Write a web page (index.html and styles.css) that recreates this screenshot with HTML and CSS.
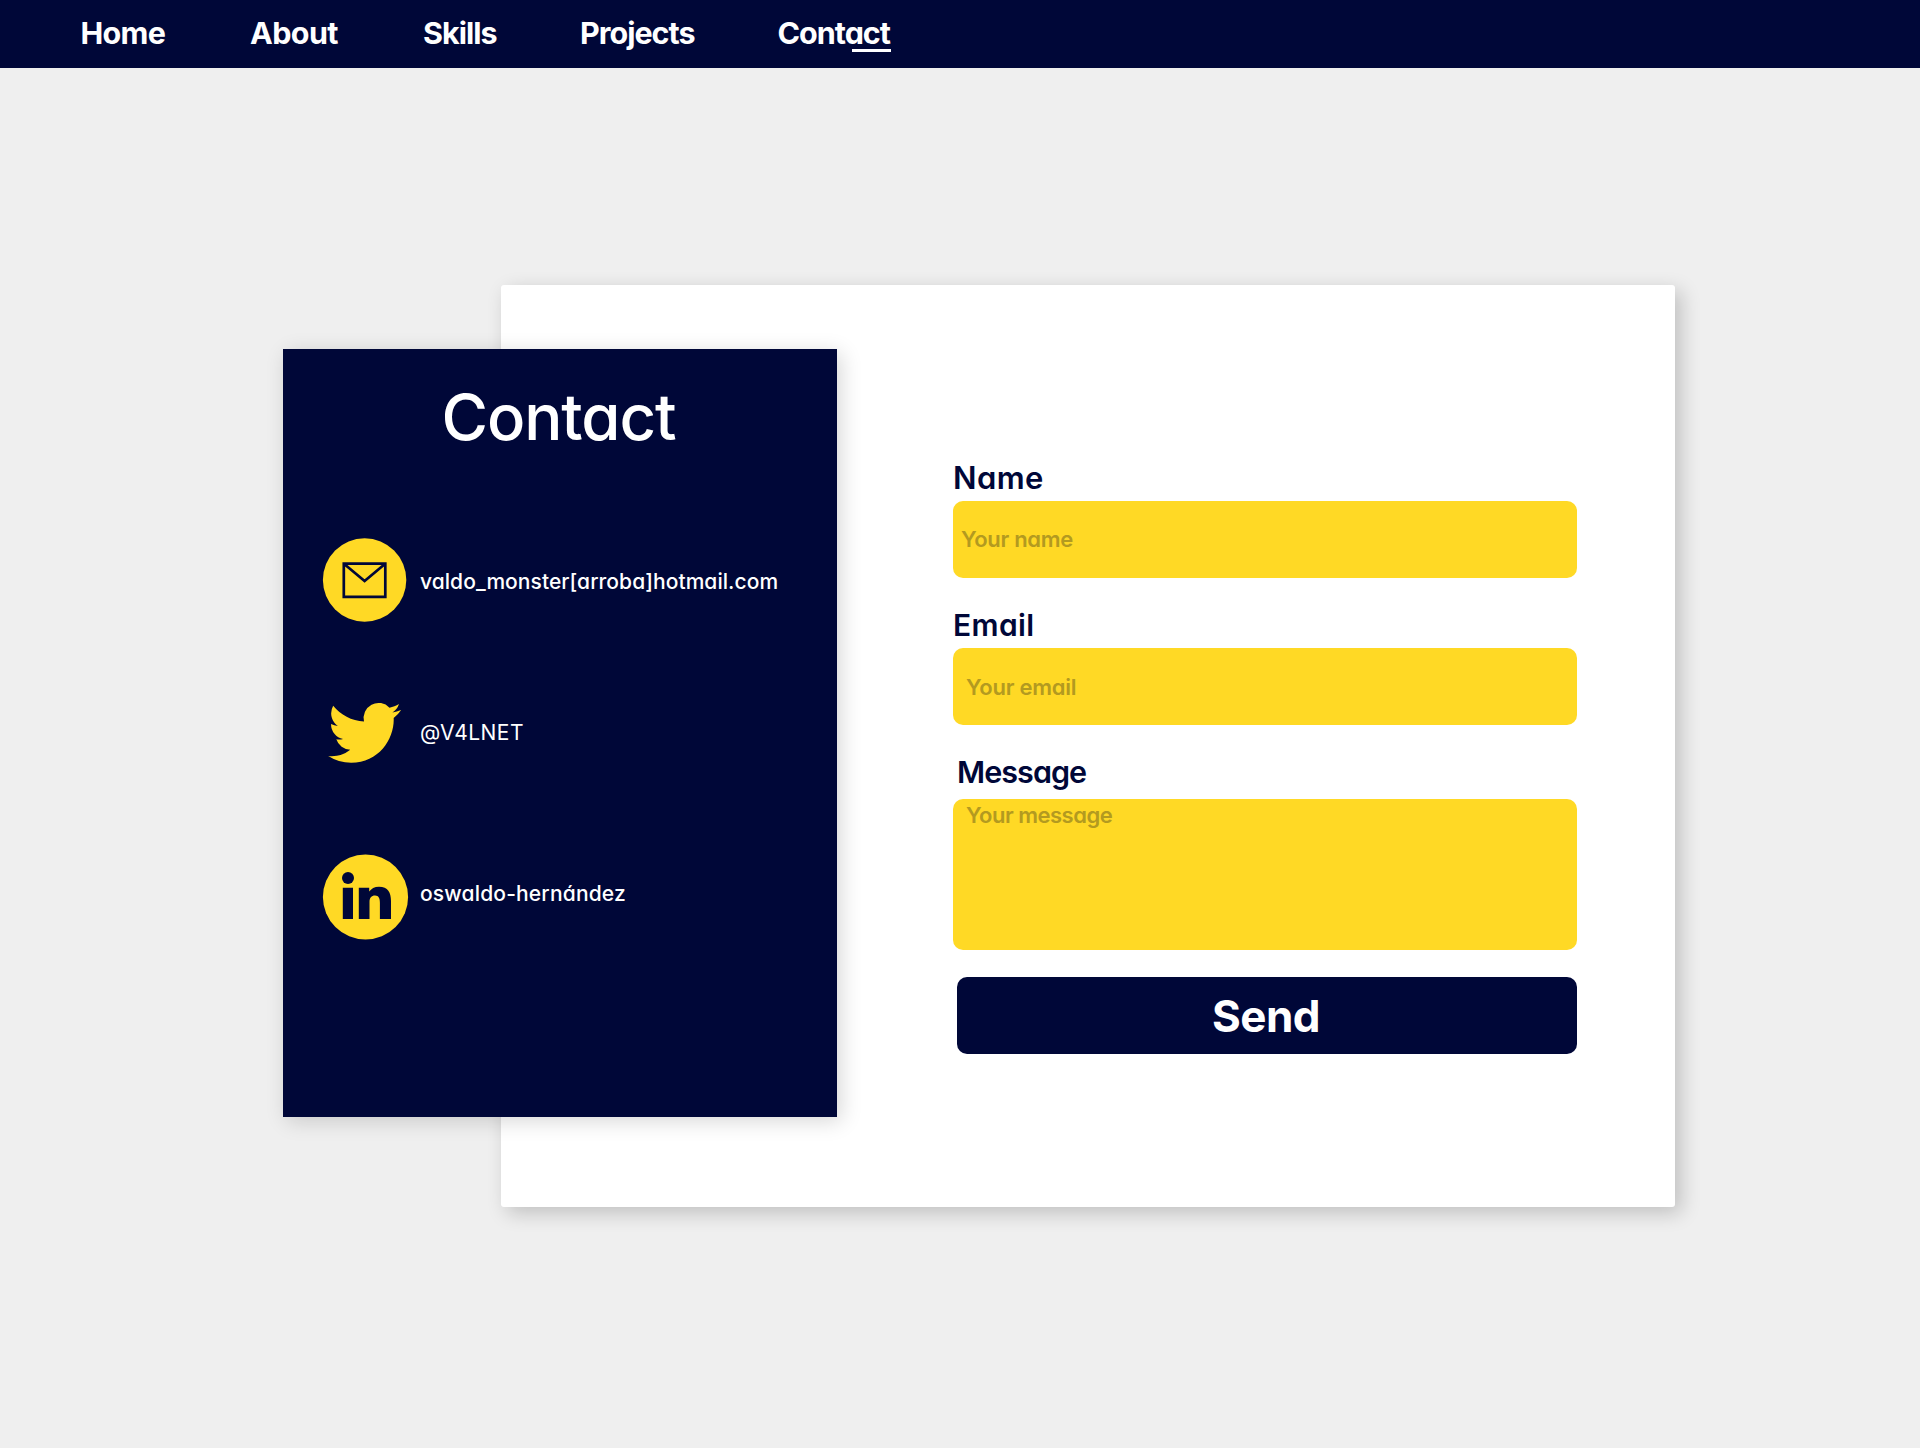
FILE: index.html
```html
<!DOCTYPE html>
<html lang="en">
<head>
<meta charset="utf-8">
<title>Contact</title>
<link rel="stylesheet" href="styles.css">
</head>
<body>
<nav class="nav">
  <a class="nav-link nav-home">Home</a>
  <a class="nav-link nav-about">About</a>
  <a class="nav-link">Skills</a>
  <a class="nav-link">Projects</a>
  <a class="nav-link nav-contact">Contact</a>
</nav>
<main class="contact">
  <aside class="info">
    <h1 class="info-title">Contact</h1>
    <div class="info-row mail">
      <svg class="icon" width="86" height="86" viewBox="0 0 86 86">
        <circle cx="41.6" cy="43" r="41.7" fill="#ffd925"/>
        <path d="M20.8 26.7H62.3V59.8H20.8ZM21.5 27.2L41.6 44L61.6 27.2" fill="none" stroke="#000738" stroke-width="2.7"/>
      </svg>
      <span class="info-text mail-text">valdo_monster[arroba]hotmail.com</span>
    </div>
    <div class="info-row twitter">
      <svg class="icon" width="86" height="86" viewBox="0 0 86 86">
        <g transform="translate(5.2 9) scale(3.04 3.07)"><path fill="#ffd925" d="M23.953 4.57a10 10 0 01-2.825.775 4.958 4.958 0 002.163-2.723c-.951.555-2.005.959-3.127 1.184a4.92 4.92 0 00-8.384 4.482C7.69 8.095 4.067 6.13 1.64 3.162a4.822 4.822 0 00-.666 2.475c0 1.71.87 3.213 2.188 4.096a4.904 4.904 0 01-2.228-.616v.06a4.923 4.923 0 003.946 4.827 4.996 4.996 0 01-2.212.085 4.936 4.936 0 004.604 3.417 9.867 9.867 0 01-6.102 2.105c-.39 0-.779-.023-1.17-.067a13.995 13.995 0 007.557 2.209c9.053 0 13.998-7.496 13.998-13.985 0-.21 0-.42-.015-.63A9.935 9.935 0 0024 4.59z"/></g>
      </svg>
      <span class="info-text twitter-text">@V4LNET</span>
    </div>
    <div class="info-row linkedin">
      <svg class="icon" width="86" height="86" viewBox="0 0 86 86">
        <circle cx="42.5" cy="43" r="42.6" fill="#ffd925"/>
        <circle cx="25" cy="24" r="6" fill="#000738"/>
        <path fill="#000738" d="M19.800 33.700H30V65H19.800ZM35.800 33.700H46.200V37.600C48.200 34.700 51.500 32.700 56 32.700C65 32.700 68 38.500 68 47V65H56.900V49C56.900 45 56 41.600 52 41.600C48.500 41.600 46.500 44 46.500 48V65H35.800Z"/>
      </svg>
      <span class="info-text linkedin-text">oswaldo-hernández</span>
    </div>
  </aside>
  <form class="card">
    <label class="label name-label" for="name">Name</label>
    <input class="field name-field" id="name" placeholder="Your name">
    <label class="label email-label" for="email">Email</label>
    <input class="field email-field" id="email" placeholder="Your email">
    <label class="label message-label" for="message">Message</label>
    <textarea class="field message-field" id="message" placeholder="Your message"></textarea>
    <button class="send" type="button">Send</button>
  </form>
</main>
</body>
</html>
```
FILE: styles.css
```css
* { box-sizing: border-box; }

body {
  margin: 0;
  min-height: 1448px;
  background: #efefef;
  color: #000738;
  font-family: Inter, "Open Sans", sans-serif;
  font-feature-settings: "cv11";
}

.nav {
  display: grid;
  grid-template-columns: 169.5px 173px 157px 197.5px auto;
  justify-content: start;
  height: 68px;
  padding-left: 80.5px;
  background: #000738;
}

.nav-link {
  position: relative;
  color: #fff;
  font-size: 30.5px;
  font-weight: 650;
  line-height: 66px;
  letter-spacing: -1px;
}

.nav-home { letter-spacing: -0.7px; }
.nav-about { letter-spacing: -0.6px; }

.nav-contact::after {
  content: "";
  position: absolute;
  left: 74.5px;
  top: 49px;
  width: 39px;
  height: 3px;
  background: #fff;
}

.contact {
  display: grid;
  grid-template-columns: 218px 336px 838px;
  margin: 217px 0 0 283px;
}

.info {
  grid-area: 1 / 1 / 2 / 3;
  z-index: 1;
  height: 768px;
  margin-top: 64px;
  padding: 28px 40px 0;
  background: #000738;
  box-shadow: 4px 4px 20px rgba(0, 0, 0, 0.16);
  color: #fff;
}

.info-title {
  margin: 0;
  padding-right: 3px;
  font-size: 63.5px;
  font-weight: 450;
  line-height: 80px;
  letter-spacing: -1.1px;
  text-align: center;
}

.info-row {
  display: flex;
  align-items: flex-start;
  gap: 11px;
  height: 86px;
}

.mail { margin-top: 80px; }
.twitter { margin-top: 64px; }
.linkedin { margin-top: 81px; }

.icon { flex: none; overflow: visible; }

.info-text {
  font-size: 21px;
  font-weight: 450;
  line-height: 90px;
  letter-spacing: 0.06px;
}

.twitter-text {
  font-weight: 400;
  line-height: 92px;
  letter-spacing: 0.45px;
}

.linkedin-text {
  line-height: 79px;
  letter-spacing: 0.17px;
}

.card {
  grid-area: 1 / 2 / 2 / 4;
  display: flex;
  flex-direction: column;
  height: 922px;
  padding: 173px 98px 0 452px;
  border-radius: 3px;
  background: #fff;
  box-shadow: 6px 6px 20px rgba(0, 0, 0, 0.2);
}

.label {
  height: 43px;
  font-size: 31px;
  font-weight: 600;
  line-height: 39px;
}

.name-label { letter-spacing: 0.4px; }

.email-label {
  height: 40px;
  margin-top: 30px;
  font-size: 30px;
  line-height: 34px;
  letter-spacing: 0.4px;
}

.message-label {
  height: 44px;
  margin-top: 30px;
  padding-left: 4px;
  font-size: 30.5px;
  line-height: 34px;
  letter-spacing: -0.95px;
}

.field {
  width: 624px;
  height: 77px;
  border: 0;
  border-radius: 10px;
  outline: 0;
  background: #ffd925;
  color: #000738;
  font: 600 22px/26px Inter, "Open Sans", sans-serif;
  font-feature-settings: "cv11";
  letter-spacing: -0.3px;
  resize: none;
}

.field::placeholder { color: #b39a20; }

.name-field { padding: 0 8px 2px; }

.email-field {
  padding: 0 13px;
  letter-spacing: -0.25px;
}

.message-field {
  height: 151px;
  padding: 3px 13px;
  letter-spacing: -0.5px;
}

.send {
  width: 620px;
  height: 77px;
  margin: 27px 0 0 4px;
  padding: 1px 2px 0 0;
  border: 0;
  border-radius: 10px;
  background: #000738;
  color: #fff;
  font: 700 44px/74px Inter, "Open Sans", sans-serif;
  letter-spacing: -0.5px;
}
```
